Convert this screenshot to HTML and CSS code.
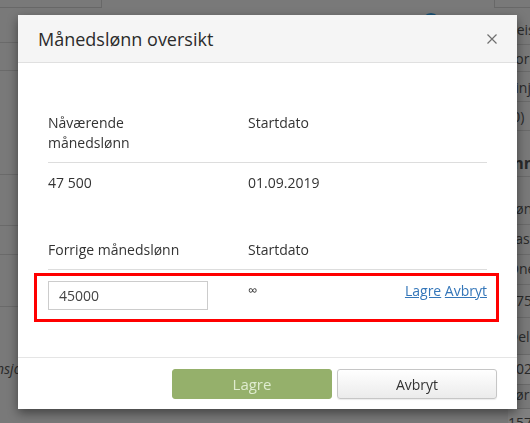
FILE: index.html
```html
<!DOCTYPE html>
<html lang="no">
<head>
    <meta charset="UTF-8">
    <meta name="viewport" content="width=device-width, initial-scale=1.0">
    <title>Månedslønn oversikt</title>
    <link rel="stylesheet" href="styles.css">
</head>
<body>
    <div class="page">
        <div class="page-top">
            <div class="top-box top-left"></div>
            <div class="top-box top-right"></div>
        </div>
        <div class="page-main">
            <div class="side">
                <div class="side-row r1"></div>
                <div class="side-row r2"></div>
                <div class="side-row r3"></div>
                <div class="side-row r4"></div>
                <div class="side-row r5"></div>
                <div class="side-row r6"></div>
                <div class="side-note">nsjon</div>
            </div>
            <div class="center">
                <span class="avatar"></span>
            </div>
            <div class="content">
                <div class="row c1">Reise</div>
                <div class="row c2">Form</div>
                <div class="row c3">Linje</div>
                <div class="row c4">(0)</div>
                <div class="row heading">Inntekt</div>
                <div class="row c6">Lønn</div>
                <div class="row c7">Fast</div>
                <div class="row c8">One</div>
                <div class="row c9">475</div>
                <div class="row c10">Del</div>
                <div class="row c11 shade">102,</div>
                <div class="row c12">Før</div>
                <div class="row c13 shade">1570</div>
            </div>
        </div>
    </div>

    <div class="modal">
        <div class="modal-header">
            <h4 class="modal-title">Månedslønn oversikt</h4>
            <button class="close" type="button">
                <svg width="10" height="10" viewBox="0 0 10 10">
                    <path d="M0.5 0.5 L9.5 9.5 M9.5 0.5 L0.5 9.5" stroke="#6f6f6f" stroke-width="1.2" fill="none"/>
                </svg>
            </button>
        </div>

        <div class="modal-body">
            <table class="salary-table">
                <tr>
                    <th class="col-first">Nåværende<br>månedslønn</th>
                    <th>Startdato</th>
                </tr>
                <tr>
                    <td class="col-first">47 500</td>
                    <td>01.09.2019</td>
                </tr>
            </table>

            <table class="salary-table second">
                <tr>
                    <th class="col-first">Forrige månedslønn</th>
                    <th>Startdato</th>
                </tr>
            </table>

            <div class="edit-row">
                <input class="salary-input" type="text" value="45000">
                <span class="infinity">∞</span>
                <span class="edit-links"><a href="#">Lagre</a> <a href="#">Avbryt</a></span>
            </div>
        </div>

        <div class="modal-footer">
            <button class="btn btn-save" type="button">Lagre</button>
            <button class="btn btn-cancel" type="button">Avbryt</button>
        </div>
    </div>
</body>
</html>
```

FILE: styles.css
```css
* {
    margin: 0;
    padding: 0;
    box-sizing: border-box;
}

body {
    width: 530px;
    height: 423px;
    overflow: hidden;
    background-color: #797979;
    font-family: "Open Sans", "Noto Sans", sans-serif;
    font-size: 14px;
    color: #333;
}

/* page behind the dialog */
.page {
    color: #2a2a2a;
}

.page-top {
    display: flex;
    justify-content: space-between;
    height: 8px;
}

.top-box {
    border-bottom: 1px solid #686868;
}

.top-left {
    width: 102px;
    border-right: 1px solid #686868;
}

.top-right {
    width: 36px;
    border-left: 1px solid #686868;
}

.page-main {
    display: flex;
}

.side {
    width: 100px;
}

.side-row {
    border-bottom: 1px solid #6a6a6a;
}

.r1 { height: 35px; }
.r2 { height: 28px; }
.r3 { height: 104px; }
.r4 { height: 51px; }
.r5 { height: 29px; }
.r6 { height: 52px; }

.side-note {
    padding-top: 52px;
    line-height: 20px;
    font-style: italic;
    margin-left: -4px;
}

.center {
    flex: 1;
    padding: 5px 0 0 322px;
}

.avatar {
    display: block;
    width: 18px;
    height: 18px;
    border-radius: 50%;
    background-color: #1b5275;
}

.content {
    width: 22px;
    padding-top: 8px;
    white-space: nowrap;
}

.row {
    border-bottom: 1px solid #6a6a6a;
    line-height: 20px;
}

.c1 { height: 29px; padding-top: 4px; }
.c2 { height: 27px; padding-top: 4px; }
.c3 { height: 30px; padding-top: 6px; }
.c4 { height: 29px; padding-top: 5px; }
.heading { height: 46px; padding-top: 22px; font-weight: bold; font-size: 16px; }
.c6 { height: 48px; padding-top: 22px; }
.c7 { height: 30px; padding-top: 4px; }
.c8 { height: 30px; padding-top: 4px; }
.c9 { height: 33px; padding-top: 6px; }
.c10 { height: 37px; padding-top: 9px; }
.c11 { height: 30px; padding-top: 4px; }
.c12 { height: 24px; padding-top: 0; }
.c13 { height: 30px; padding-top: 4px; }

.shade {
    background-color: #808080;
}

/* dialog */
.modal {
    position: fixed;
    left: 18px;
    top: 15px;
    width: 499px;
    background-color: white;
    box-shadow: 0 4px 10px rgba(0, 0, 0, 0.45);
}

.modal-header {
    display: flex;
    align-items: center;
    justify-content: space-between;
    height: 48px;
    padding: 0 20px;
    background-color: #f5f5f5;
    border-bottom: 1px solid #e0e0e0;
}

.modal-title {
    font-size: 18px;
    font-weight: normal;
    color: #2b2b2b;
    line-height: 22px;
}

.close {
    border: none;
    background: none;
    width: 10px;
    height: 10px;
    display: flex;
    cursor: pointer;
}

.modal-body {
    padding: 42px 30px 35px 30px;
}

.salary-table {
    width: 100%;
    border-collapse: collapse;
}

.salary-table th,
.salary-table td {
    text-align: left;
    font-weight: normal;
    line-height: 20px;
    vertical-align: top;
}

.salary-table th {
    padding: 8px 0 9px 0;
    border-bottom: 1px solid #dddddd;
}

.salary-table td {
    padding: 10px 0;
}

.col-first {
    width: 200px;
}

.second {
    margin-top: 29px;
}

.edit-row {
    display: grid;
    grid-template-columns: 200px 1fr auto;
    align-items: start;
    margin: 3px -12px 0 -14px;
    padding: 5px 9px 9px 11px;
    border: 3px solid #ff0000;
}

.salary-input {
    width: 160px;
    height: 29px;
    padding: 0 10px;
    border: 1px solid #cccccc;
    font-family: "Open Sans", "Noto Sans", sans-serif;
    font-size: 14px;
    color: #444;
}

.infinity {
    line-height: 18px;
    font-size: 13px;
}

.edit-links {
    line-height: 20px;
}

.edit-links a {
    color: #3476b9;
}

.modal-footer {
    display: flex;
    justify-content: flex-end;
    gap: 5px;
    padding: 11px 20px 10px 20px;
    border-top: 1px solid #e5e5e5;
}

.btn {
    width: 160px;
    height: 30px;
    border-radius: 3px;
    font-family: "Open Sans", "Noto Sans", sans-serif;
    font-size: 14px;
    cursor: pointer;
}

.btn-save {
    border: 1px solid #95b06b;
    background-color: #95b06b;
    color: #dfeccf;
    font-size: 15px;
}

.btn-cancel {
    border: 1px solid #c6c6c6;
    background: linear-gradient(#ffffff, #ebebeb);
    color: #333;
    box-shadow: 0 1px 1px rgba(0, 0, 0, 0.08);
}
```
